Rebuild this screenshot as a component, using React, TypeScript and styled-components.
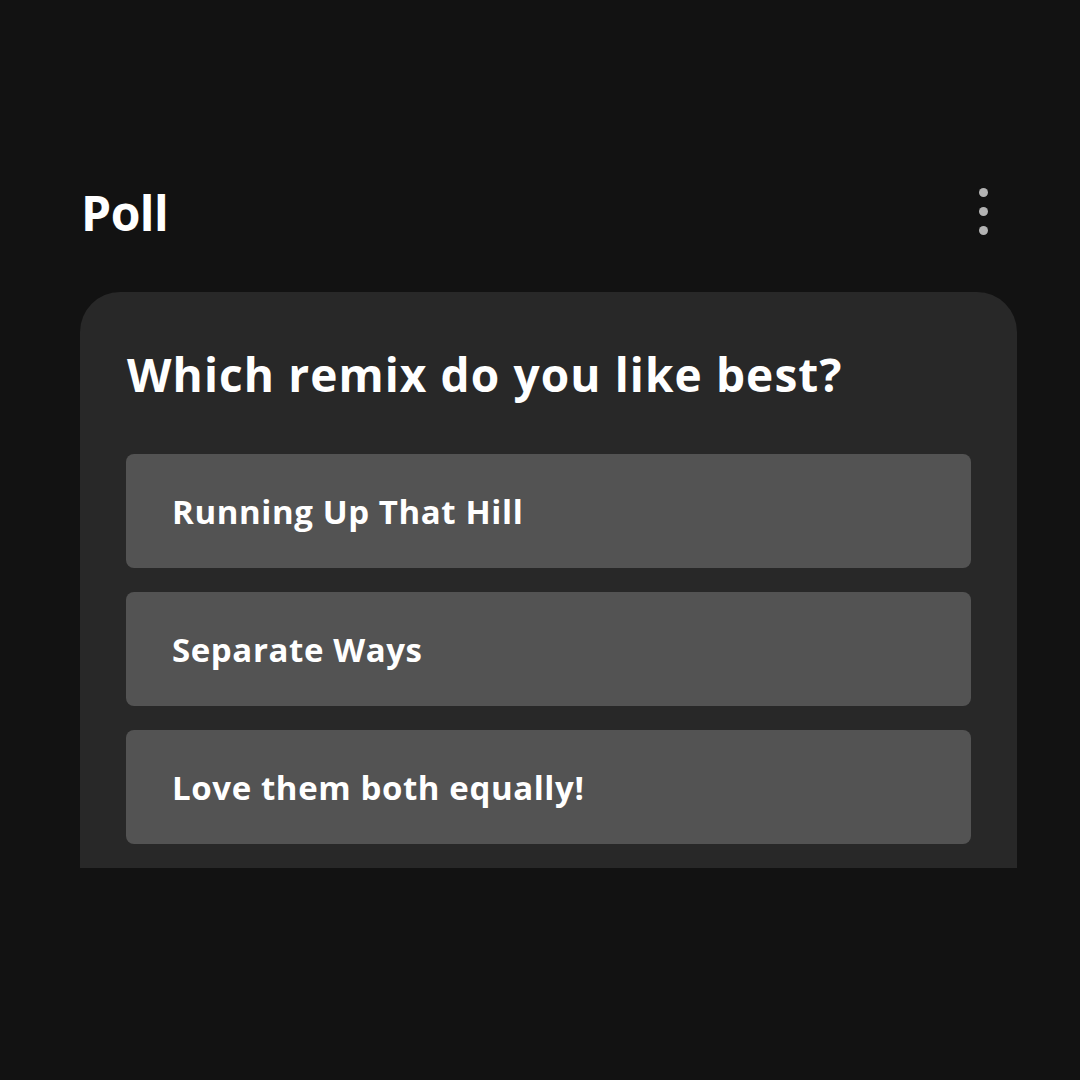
import React from 'react'
import styled, { createGlobalStyle } from 'styled-components'

const GlobalStyle = createGlobalStyle`
  html, body {
    margin: 0;
    padding: 0;
    background-color: #121212;
  }
  body {
    font-family: 'Open Sans', 'Lato', sans-serif;
    color: #ffffff;
  }
`

const Page = styled.main`
  width: 1080px;
  height: 1080px;
  box-sizing: border-box;
  padding: 176px 63px 0 80px;
  display: flex;
  flex-direction: column;
  overflow: hidden;
`

const HeaderRow = styled.header`
  display: flex;
  flex-direction: row;
  justify-content: space-between;
  align-items: center;
  padding: 0 29px 0 1px;
  height: 72px;
`

const Title = styled.h1`
  margin: 0;
  font-size: 48px;
  font-weight: 700;
  letter-spacing: -0.5px;
`

const MoreButton = styled.button`
  display: flex;
  flex-direction: column;
  gap: 10px;
  padding: 0;
  margin-top: -2px;
  border: none;
  background: none;
  cursor: pointer;
`

const Dot = styled.span`
  width: 9px;
  height: 9px;
  border-radius: 50%;
  background-color: #b3b3b3;
`

const Card = styled.section`
  margin-top: 44px;
  height: 576px;
  box-sizing: border-box;
  background-color: #282828;
  border-radius: 40px 40px 0 0;
  padding: 46px 46px 0 46px;
  display: flex;
  flex-direction: column;
`

const Question = styled.h2`
  margin: 0 0 44px 1px;
  font-size: 46px;
  font-weight: 700;
  line-height: 72px;
  letter-spacing: 1.1px;
`

const Options = styled.div`
  display: flex;
  flex-direction: column;
  gap: 24px;
`

const Option = styled.button`
  height: 114px;
  box-sizing: border-box;
  padding: 0 46px;
  border: none;
  border-radius: 8px;
  background-color: #535353;
  color: #ffffff;
  font-family: inherit;
  font-size: 33px;
  font-weight: 700;
  letter-spacing: 0.6px;
  text-align: left;
  cursor: pointer;
`

const options = ['Running Up That Hill', 'Separate Ways', 'Love them both equally!']

const App = () => {
  return (
    <>
      <GlobalStyle />
      <Page>
        <HeaderRow>
          <Title>Poll</Title>
          <MoreButton aria-label="More options">
            <Dot />
            <Dot />
            <Dot />
          </MoreButton>
        </HeaderRow>
        <Card>
          <Question>Which remix do you like best?</Question>
          <Options>
            {options.map((o) => (
              <Option key={o}>{o}</Option>
            ))}
          </Options>
        </Card>
      </Page>
    </>
  )
}

export default App
